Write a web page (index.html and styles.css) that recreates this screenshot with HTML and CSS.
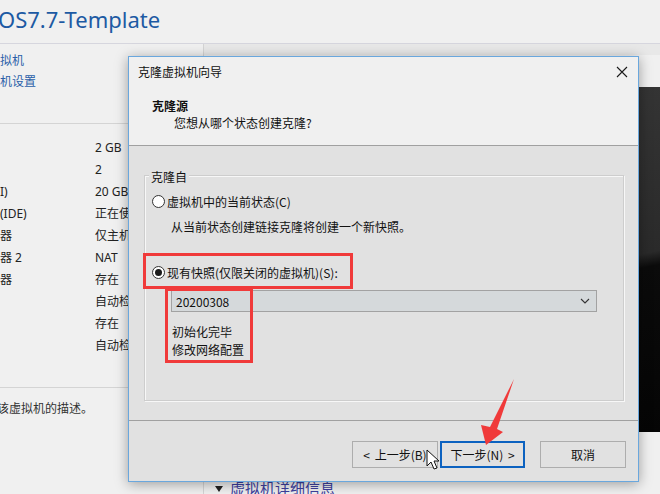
FILE: index.html
```html
<!DOCTYPE html>
<html lang="zh-CN">
<head>
    <meta charset="UTF-8">
    <meta name="viewport" content="width=device-width, initial-scale=1.0">
    <title>克隆虚拟机向导</title>
    <link rel="stylesheet" href="styles.css">
</head>
<body>
    <div class="app-title">OS7.7-Template</div>

    <div class="main">
        <div class="sidebar">
            <div class="links">
                <div class="link">拟机</div>
                <div class="link">机设置</div>
            </div>
            <div class="specs">
                <div class="row"><span class="k"></span><span class="v">2 GB</span></div>
                <div class="row"><span class="k"></span><span class="v">2</span></div>
                <div class="row"><span class="k">I)</span><span class="v">20 GB</span></div>
                <div class="row"><span class="k">(IDE)</span><span class="v">正在使用</span></div>
                <div class="row"><span class="k">器</span><span class="v">仅主机</span></div>
                <div class="row"><span class="k">器 2</span><span class="v">NAT</span></div>
                <div class="row"><span class="k">器</span><span class="v">存在</span></div>
                <div class="row"><span class="k"></span><span class="v">自动检测</span></div>
                <div class="row"><span class="k"></span><span class="v">存在</span></div>
                <div class="row"><span class="k"></span><span class="v">自动检测</span></div>
            </div>
            <div class="desc">该虚拟机的描述。</div>
        </div>

        <div class="content">
            <div class="tabband"></div>
            <div class="stage">
                <div class="console"></div>
            </div>
            <div class="details"><span class="tri"></span>虚拟机详细信息</div>
        </div>
    </div>

    <!-- 克隆向导对话框 -->
    <div class="dialog">
        <div class="dlg-head">
            <div class="titlebar">
                <span>克隆虚拟机向导</span>
                <span class="close">
                    <svg width="12" height="12" viewBox="0 0 12 12">
                        <path d="M1 1 L11 11 M11 1 L1 11" stroke="#1a1a1a" stroke-width="1.1" fill="none"/>
                    </svg>
                </span>
            </div>
            <div class="header">
                <div class="header-title">克隆源</div>
                <div class="header-sub">您想从哪个状态创建克隆?</div>
            </div>
        </div>

        <div class="dlg-body">
            <div class="group">
                <div class="group-label">克隆自</div>

                <div class="opt first"><span class="radio"></span>虚拟机中的当前状态(C)</div>
                <div class="hint">从当前状态创建链接克隆将创建一个新快照。</div>

                <div class="opt second"><span class="radio checked"></span>现有快照(仅限关闭的虚拟机)(S):</div>
                <div class="select">
                    <span>20200308</span>
                    <svg width="10" height="6" viewBox="0 0 10 6">
                        <path d="M1 1 L5 5 L9 1" stroke="#333" stroke-width="1.1" fill="none"/>
                    </svg>
                </div>
                <div class="notes">初始化完毕<br>修改网络配置</div>

                <div class="mark mark-radio"></div>
                <div class="mark mark-snap"></div>
            </div>
        </div>

        <div class="dlg-foot">
            <button class="btn">&lt; 上一步(B)</button>
            <button class="btn primary">下一步(N) &gt;</button>
            <button class="btn cancel">取消</button>
        </div>
    </div>

    <!-- 标注箭头和鼠标指针 -->
    <svg class="overlay" width="660" height="494" viewBox="0 0 660 494">
        <polygon points="514,379 497,429 503,432 486,445 481,425 490,427" fill="#f03a3a"/>
        <polygon points="427,450 427,466 431,462 434,469 437,468 434,461 439,461" fill="#fff" stroke="#111" stroke-width="1"/>
    </svg>
</body>
</html>
```

FILE: styles.css
```css
body {
    margin: 0;
    width: 660px;
    height: 494px;
    overflow: hidden;
    position: relative;
    background: #f0f0f0;
    font-family: "Noto Sans", "Noto Sans CJK SC", sans-serif;
    font-size: 12px;
    color: #222;
}

.app-title {
    height: 43px;
    line-height: 38px;
    border-bottom: 1px solid #d6d6de;
    margin-left: -2px;
    font-size: 22px;
    color: #1d5aa3;
    white-space: nowrap;
}

.main {
    display: flex;
    height: 450px;
}

.sidebar {
    width: 203px;
    flex: none;
    border-right: 1px solid #d4d4d4;
}

.links {
    height: 80px;
    padding-top: 6px;
    box-sizing: border-box;
    border-bottom: 1px solid #d4d4d4;
}

.link {
    line-height: 21px;
    color: #2a5fa8;
}

.specs {
    height: 264px;
    padding-top: 13px;
    box-sizing: border-box;
    border-bottom: 1px solid #d4d4d4;
}

.row {
    display: flex;
    height: 22px;
    line-height: 22px;
    white-space: nowrap;
}

.row .k {
    width: 95px;
    flex: none;
}

.desc {
    padding-top: 12px;
    line-height: 18px;
    margin-left: -3px;
    color: #333;
}

.content {
    flex: 1;
    display: flex;
    flex-direction: column;
}

.tabband {
    height: 11px;
    background: #e8e8e8;
}

.stage {
    height: 423px;
    display: flex;
    justify-content: flex-end;
    align-items: flex-start;
}

.console {
    width: 21px;
    height: 345px;
    margin-top: 32px;
    background: linear-gradient(168deg, #343434 0, #2a2a2a 48%, #0b0b0b 52%, #050505 100%);
}

.details {
    height: 16px;
    line-height: 20px;
    padding-left: 11px;
    font-size: 15px;
    color: #3d3f9e;
    white-space: nowrap;
}

.tri {
    display: inline-block;
    width: 0;
    height: 0;
    border-left: 4px solid transparent;
    border-right: 4px solid transparent;
    border-top: 6px solid #222;
    margin-right: 7px;
    vertical-align: 2px;
}

/* dialog */
.dialog {
    position: absolute;
    left: 128px;
    top: 56px;
    width: 511px;
    height: 426px;
    box-sizing: border-box;
    border: 1px solid #6aa7dd;
    background: #e1e1e1;
    box-shadow: 0 2px 12px rgba(0, 0, 0, 0.35);
    font-family: "Noto Sans CJK SC", sans-serif;
    color: #111;
}

.dlg-head {
    background: #f0f0f0;
    border-bottom: 1px solid #a0a0a0;
}

.titlebar {
    height: 30px;
    line-height: 30px;
    padding-left: 9px;
    padding-right: 1px;
    display: flex;
    justify-content: space-between;
}

.close {
    width: 30px;
    display: flex;
    align-items: center;
    justify-content: center;
}

.header {
    padding: 10px 0 14px 23px;
    line-height: 17px;
}

.header-title {
    font-weight: bold;
}

.header-sub {
    padding-left: 22px;
}

.dlg-body {
    height: 275px;
    box-sizing: border-box;
    padding: 29px 14px 0 15px;
    border-bottom: 1px solid #a0a0a0;
}

.group {
    position: relative;
    height: 226px;
    box-sizing: border-box;
    padding-left: 7px;
    border: 1px solid #cdcdcd;
    box-shadow: inset 1px 1px 0 #f7f7f7, 1px 1px 0 #f7f7f7;
}

.group-label {
    width: fit-content;
    margin-top: -8px;
    margin-left: -3px;
    padding: 0 2px;
    line-height: 17px;
    background: #e1e1e1;
}

.opt {
    display: flex;
    align-items: center;
    height: 17px;
}

.opt.first {
    margin-top: 8px;
}

.opt.second {
    margin-top: 29px;
}

.radio {
    width: 11px;
    height: 11px;
    border: 1px solid #333;
    border-radius: 50%;
    background: #fff;
    margin-right: 2px;
    position: relative;
}

.radio.checked::after {
    content: "";
    position: absolute;
    left: 2px;
    top: 2px;
    width: 7px;
    height: 7px;
    border-radius: 50%;
    background: #1a1a1a;
}

.hint {
    margin-top: 8px;
    padding-left: 19px;
    line-height: 17px;
}

.select {
    margin-top: 9px;
    margin-left: 19px;
    width: 426px;
    height: 22px;
    box-sizing: border-box;
    border: 1px solid #a2a2a2;
    background: #d5d9db;
    display: flex;
    align-items: center;
    justify-content: space-between;
    padding: 0 6px 0 4px;
}

.notes {
    margin-top: 11px;
    margin-left: 20px;
    line-height: 18px;
}

.mark {
    position: absolute;
    border: 3px solid #f03a3a;
    box-sizing: border-box;
}

.mark-radio {
    left: -2px;
    top: 77px;
    width: 210px;
    height: 36px;
}

.mark-snap {
    left: 20px;
    top: 112px;
    width: 88px;
    height: 75px;
}

.dlg-foot {
    display: flex;
    justify-content: flex-end;
    padding: 20px 12px 0 0;
}

.btn {
    width: 86px;
    height: 27px;
    box-sizing: border-box;
    border: 1px solid #adadad;
    background: #e1e1e1;
    font-family: "Noto Sans CJK SC", sans-serif;
    font-size: 12px;
    color: #111;
    padding: 0;
    word-spacing: 2px;
}

.btn.primary {
    width: 85px;
    margin-left: 2px;
    border: 2px solid #0c62c0;
}

.btn.cancel {
    margin-left: 15px;
}

.overlay {
    position: absolute;
    left: 0;
    top: 0;
    pointer-events: none;
}
```
